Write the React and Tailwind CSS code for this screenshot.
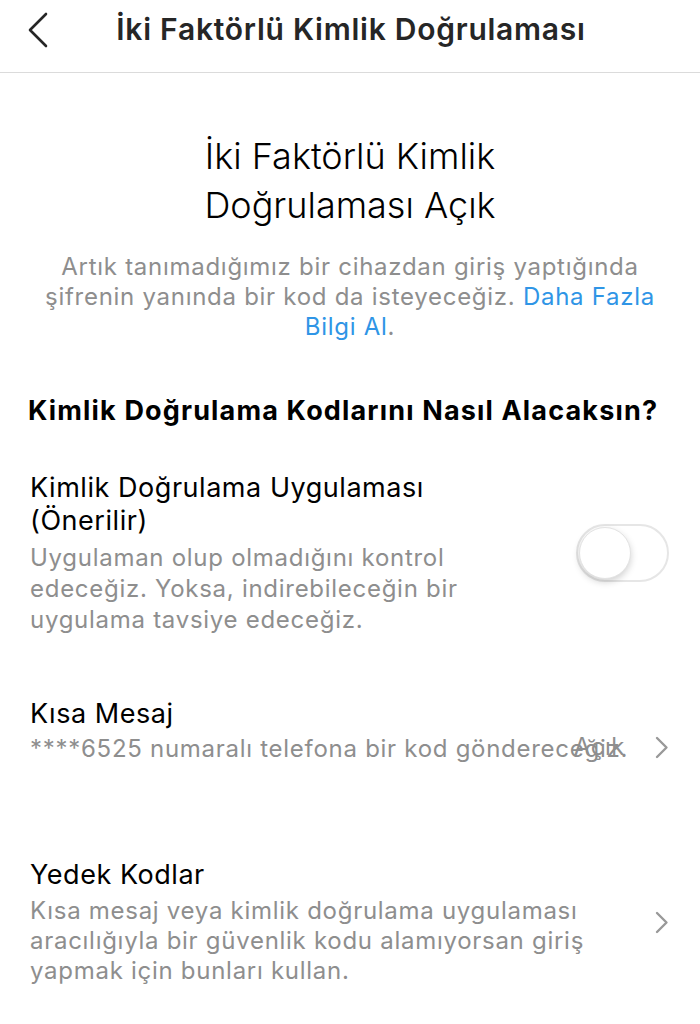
import React, { useState } from 'react'

export default function App() {
    const [appOn, setAppOn] = useState(false);

    return (
        <div className="w-[700px] h-[1024px] bg-white overflow-hidden" style={{ fontFamily: 'Inter, "Noto Sans", sans-serif' }}>
            {/* header */}
            <div className="h-[73px] flex items-center border-b border-[#dbdbdb] relative">
                <button className="absolute left-[26px] top-[11px] w-[24px] h-[38px] flex items-center justify-center text-[#262626]">
                    <svg width="20" height="36" viewBox="0 0 20 36" fill="none" stroke="currentColor" strokeWidth="2.6" strokeLinecap="round" strokeLinejoin="round"><path d="M18 2L2 18l16 16"/></svg>
                </button>
                <h1 className="w-full text-center text-[30px] font-semibold tracking-[0.025em] text-[#262626] -mt-[14px] pl-[2px] whitespace-nowrap">İki Faktörlü Kimlik Doğrulaması</h1>
            </div>

            {/* intro */}
            <div className="pt-[59px] text-center">
                <h2 className="text-[36px] font-light leading-[49px] text-black">İki Faktörlü Kimlik<br />Doğrulaması Açık</h2>
                <p className="mt-[22px] text-[24px] leading-[30px] tracking-[0.03em] text-[#8e8e8e] whitespace-nowrap">
                    Artık tanımadığımız bir cihazdan giriş yaptığında<br />
                    şifrenin yanında bir kod da isteyeceğiz. <span className="text-[#2f95e6]">Daha Fazla</span><br />
                    <span className="text-[#2f95e6]">Bilgi Al</span>.
                </p>
            </div>

            {/* section */}
            <h3 className="mt-[53px] px-[28px] text-[27px] font-bold tracking-[0.043em] text-black leading-[32px] whitespace-nowrap">Kimlik Doğrulama Kodlarını Nasıl Alacaksın?</h3>

            {/* authenticator app */}
            <div className="mt-[44px] pl-[30px] pr-[31px] flex items-center">
                <div className="flex-1 whitespace-nowrap">
                    <p className="text-[27px] leading-[33px] tracking-[0.02em] text-black">Kimlik Doğrulama Uygulaması<br />(Önerilir)</p>
                    <p className="mt-[5px] text-[24px] leading-[31px] tracking-[0.03em] text-[#8e8e8e]">Uygulaman olup olmadığını kontrol<br />edeceğiz. Yoksa, indirebileceğin bir<br />uygulama tavsiye edeceğiz.</p>
                </div>
                <button onClick={() => setAppOn(!appOn)} className={`w-[93px] h-[58px] rounded-full border-2 ${appOn ? 'bg-[#4cd964] border-[#4cd964]' : 'bg-white border-[#e6e6e6]'} relative shrink-0`}>
                    <span className={`absolute top-[1px] ${appOn ? 'left-[36px]' : 'left-[1px]'} w-[52px] h-[52px] rounded-full bg-white shadow-[0_3px_7px_rgba(0,0,0,0.18)] border border-[#e3e3e3]`} />
                </button>
            </div>

            {/* sms */}
            <div className="mt-[62px] pl-[30px] pr-[31px] flex items-start relative">
                <div className="flex-1 whitespace-nowrap">
                    <p className="text-[27px] leading-[33px] tracking-[0.02em] text-black">Kısa Mesaj</p>
                    <p className="mt-[3px] text-[24px] leading-[31px] tracking-[0.03em] text-[#8e8e8e]">****6525 numaralı telefona bir kod göndereceğiz.</p>
                </div>
                <span className="absolute right-[75px] top-[34px] text-[24px] leading-[31px] tracking-[0.02em] text-[#8e8e8e]">Açık</span>
                <svg className="shrink-0 mt-[39px]" width="14" height="23" viewBox="0 0 14 23" fill="none" stroke="#999999" strokeWidth="2.4" strokeLinecap="round" strokeLinejoin="round"><path d="M2 2l9.5 9.5L2 21"/></svg>
            </div>

            {/* backup codes */}
            <div className="mt-[94px] pl-[30px] pr-[31px] flex items-center">
                <div className="flex-1 whitespace-nowrap">
                    <p className="text-[27px] leading-[33px] tracking-[0.02em] text-black">Yedek Kodlar</p>
                    <p className="mt-[5px] text-[24px] leading-[30px] tracking-[0.03em] text-[#8e8e8e]">Kısa mesaj veya kimlik doğrulama uygulaması<br />aracılığıyla bir güvenlik kodu alamıyorsan giriş<br />yapmak için bunları kullan.</p>
                </div>
                <svg className="shrink-0" width="14" height="23" viewBox="0 0 14 23" fill="none" stroke="#999999" strokeWidth="2.4" strokeLinecap="round" strokeLinejoin="round"><path d="M2 2l9.5 9.5L2 21"/></svg>
            </div>
        </div>
    );
}
